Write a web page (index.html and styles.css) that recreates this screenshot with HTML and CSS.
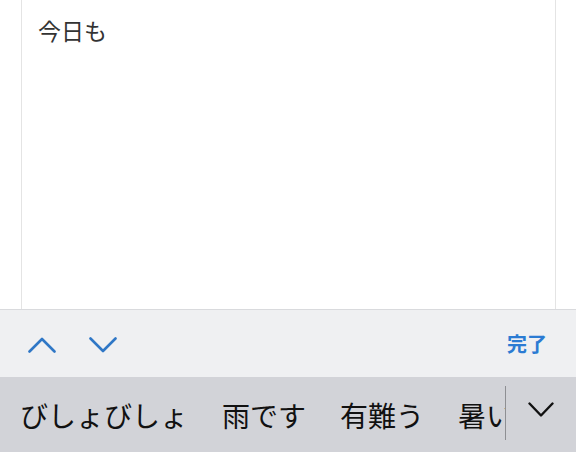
FILE: index.html
```html
<!DOCTYPE html>
<html lang="ja">
<head>
    <meta charset="UTF-8">
    <meta name="viewport" content="width=device-width, initial-scale=1.0">
    <title>メモ</title>
    <link rel="stylesheet" href="styles.css">
</head>
<body>
    <div class="editor">
        <div class="note" contenteditable="true">今日も</div>
    </div>

    <div class="toolbar">
        <div class="nav-buttons">
            <button class="nav-btn" aria-label="前へ">
                <svg width="28" height="16" viewBox="0 0 28 16"><path d="M1.5 14.5 L14 2 L26.5 14.5" fill="none" stroke="#2f77c6" stroke-width="2.6" stroke-linecap="round" stroke-linejoin="round"/></svg>
            </button>
            <button class="nav-btn" aria-label="次へ">
                <svg width="28" height="16" viewBox="0 0 28 16"><path d="M1.5 1.5 L14 14 L26.5 1.5" fill="none" stroke="#2f77c6" stroke-width="2.6" stroke-linecap="round" stroke-linejoin="round"/></svg>
            </button>
        </div>
        <button class="done-btn">完了</button>
    </div>

    <div class="candidates">
        <div class="candidate-list">
            <span class="candidate">びしょびしょ</span>
            <span class="candidate">雨です</span>
            <span class="candidate">有難う</span>
            <span class="candidate">暑い</span>
        </div>
        <button class="expand-btn" aria-label="候補を表示">
            <svg width="26" height="16" viewBox="0 0 26 16"><path d="M1.5 1.5 L13 13.5 L24.5 1.5" fill="none" stroke="#111" stroke-width="2.4" stroke-linecap="round" stroke-linejoin="round"/></svg>
        </button>
    </div>
</body>
</html>
```

FILE: styles.css
```css
body {
    margin: 0;
    width: 576px;
    height: 452px;
    overflow: hidden;
    background-color: #ffffff;
    font-family: "Noto Sans CJK JP", "Noto Sans", sans-serif;
}

button {
    border: none;
    background: none;
    padding: 0;
    font-family: inherit;
    cursor: pointer;
}

.editor {
    height: 309px;
    margin: 0 20px 0 21px;
    border-left: 1px solid #e4e4e4;
    border-right: 1px solid #e4e4e4;
    box-sizing: border-box;
    background: white;
}

.note {
    padding: 15px 16px 0;
    font-size: 23px;
    line-height: 30px;
    color: #333333;
    outline: none;
}

.toolbar {
    height: 68px;
    box-sizing: border-box;
    border-top: 1px solid #d9dadd;
    background-color: #eff0f2;
    display: flex;
    align-items: center;
    justify-content: space-between;
    padding: 0 29px 0 28px;
}

.nav-buttons {
    display: flex;
    gap: 33px;
    align-items: center;
}

.nav-btn {
    display: flex;
    width: 28px;
    height: 16px;
    margin-top: 2px;
}

.done-btn {
    font-size: 20px;
    font-weight: bold;
    color: #2b7bd3;
    line-height: 28px;
}

.candidates {
    height: 75px;
    background-color: #d2d3d8;
    display: flex;
    align-items: stretch;
}

.candidate-list {
    width: 506px;
    overflow: hidden;
    white-space: nowrap;
    display: flex;
    align-items: center;
    gap: 34px;
    padding: 4px 0 0 20px;
    box-sizing: border-box;
    font-size: 28px;
    color: #111111;
    border-right: 1px solid #8e8f93;
    margin: 9px 0 12px;
}

.candidate {
    line-height: 40px;
    flex-shrink: 0;
}

.expand-btn {
    flex: 1;
    display: flex;
    align-items: center;
    justify-content: center;
    padding-bottom: 10px;
}
```
